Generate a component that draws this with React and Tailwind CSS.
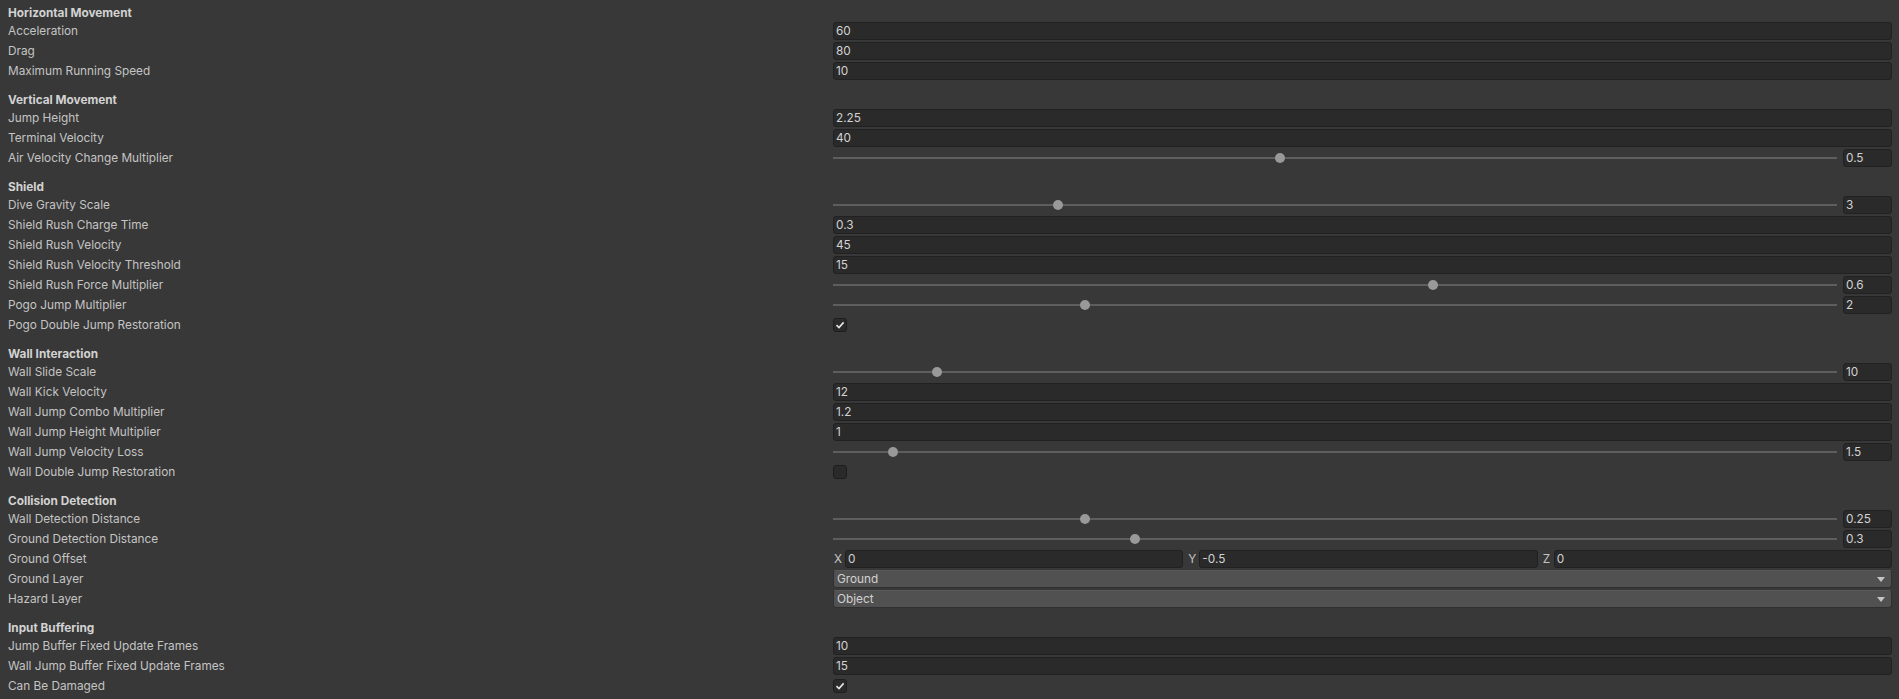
import React from "react";

// Unity-style inspector: player movement settings
const sections = [
  {
    title: "Horizontal Movement",
    rows: [
      { label: "Acceleration", type: "field", value: "60" },
      { label: "Drag", type: "field", value: "80" },
      { label: "Maximum Running Speed", type: "field", value: "10" },
    ],
  },
  {
    title: "Vertical Movement",
    rows: [
      { label: "Jump Height", type: "field", value: "2.25" },
      { label: "Terminal Velocity", type: "field", value: "40" },
      { label: "Air Velocity Change Multiplier", type: "slider", value: "0.5", thumb: 442 },
    ],
  },
  {
    title: "Shield",
    rows: [
      { label: "Dive Gravity Scale", type: "slider", value: "3", thumb: 220 },
      { label: "Shield Rush Charge Time", type: "field", value: "0.3" },
      { label: "Shield Rush Velocity", type: "field", value: "45" },
      { label: "Shield Rush Velocity Threshold", type: "field", value: "15" },
      { label: "Shield Rush Force Multiplier", type: "slider", value: "0.6", thumb: 595 },
      { label: "Pogo Jump Multiplier", type: "slider", value: "2", thumb: 247 },
      { label: "Pogo Double Jump Restoration", type: "check", value: true },
    ],
  },
  {
    title: "Wall Interaction",
    rows: [
      { label: "Wall Slide Scale", type: "slider", value: "10", thumb: 99 },
      { label: "Wall Kick Velocity", type: "field", value: "12" },
      { label: "Wall Jump Combo Multiplier", type: "field", value: "1.2" },
      { label: "Wall Jump Height Multiplier", type: "field", value: "1" },
      { label: "Wall Jump Velocity Loss", type: "slider", value: "1.5", thumb: 55 },
      { label: "Wall Double Jump Restoration", type: "check", value: false },
    ],
  },
  {
    title: "Collision Detection",
    rows: [
      { label: "Wall Detection Distance", type: "slider", value: "0.25", thumb: 247 },
      { label: "Ground Detection Distance", type: "slider", value: "0.3", thumb: 297 },
      { label: "Ground Offset", type: "vector", value: ["0", "-0.5", "0"] },
      { label: "Ground Layer", type: "dropdown", value: "Ground" },
      { label: "Hazard Layer", type: "dropdown", value: "Object" },
    ],
  },
  {
    title: "Input Buffering",
    rows: [
      { label: "Jump Buffer Fixed Update Frames", type: "field", value: "10" },
      { label: "Wall Jump Buffer Fixed Update Frames", type: "field", value: "15" },
      { label: "Can Be Damaged", type: "check", value: true },
    ],
  },
];

function NumberField({ value, className = "" }) {
  return (
    <div
      className={`h-[18px] rounded-[3px] border border-[#212121] bg-[#2a2a2a] pl-[2px] text-[11.8px] leading-[17px] text-[#d2d2d2] ${className}`}
    >
      {value}
    </div>
  );
}

function Slider({ value, thumb }) {
  return (
    <div className="flex items-center">
      <div className="relative h-[2px] flex-1 bg-[#5e5e5e]">
        <div
          className="absolute top-[-4px] h-[10px] w-[10px] rounded-full bg-[#999999]"
          style={{ left: thumb }}
        />
      </div>
      <NumberField value={value} className="ml-[6px] w-[49px]" />
    </div>
  );
}

function Check({ checked }) {
  return (
    <div className="flex h-[14px] w-[14px] items-center justify-center rounded-[3px] border border-[#1e1e1e] bg-[#2a2a2a]">
      {checked && (
        <svg width="10" height="10" viewBox="0 0 10 10">
          <path d="M1.5 5.2 L4 7.6 L8.6 2.4" fill="none" stroke="#e4e4e4" strokeWidth="1.6" />
        </svg>
      )}
    </div>
  );
}

function Dropdown({ value }) {
  return (
    <div className="flex h-[18px] items-center justify-between rounded-[3px] border border-[#303030] border-t-[#585858] bg-[#515151] pl-[3px] pr-[6px] pt-[1px] text-[11.8px] text-[#d2d2d2]">
      <span>{value}</span>
      <svg width="8" height="5" viewBox="0 0 8 5">
        <path d="M0 0 H8 L4 5 Z" fill="#c4c4c4" />
      </svg>
    </div>
  );
}

function Vector({ values }) {
  return (
    <div className="flex gap-[4px]">
      {["X", "Y", "Z"].map((axis, i) => (
        <div key={axis} className="flex flex-1 items-center">
          <span className="w-[12px] pl-[1px] pt-[1px] text-[11.8px] text-[#c4c4c4]">{axis}</span>
          <NumberField value={values[i]} className="flex-1" />
        </div>
      ))}
    </div>
  );
}

function Control({ row }) {
  if (row.type === "slider") return <Slider value={row.value} thumb={row.thumb} />;
  if (row.type === "check") return <Check checked={row.value} />;
  if (row.type === "dropdown") return <Dropdown value={row.value} />;
  if (row.type === "vector") return <Vector values={row.value} />;
  return <NumberField value={row.value} />;
}

export default function App() {
  return (
    <div
      className="h-[699px] w-full overflow-hidden bg-[#383838] pl-2 pr-[7px] pt-[1px]"
      style={{ fontFamily: "Inter, 'Noto Sans', sans-serif" }}
    >
      {sections.map((s, si) => (
        <div key={s.title}>
          <div
            className={`flex h-[20px] items-end text-[11.8px] font-bold leading-[15px] text-[#d2d2d2] ${si === 0 ? "" : "mt-[7px]"}`}
          >
            {s.title}
          </div>
          {s.rows.map((row) => (
            <div key={row.label} className="flex h-[20px] items-center">
              <div className="w-[825px] shrink-0 pt-[1px] text-[11.8px] text-[#c4c4c4]">{row.label}</div>
              <div className="flex-1">
                <Control row={row} />
              </div>
            </div>
          ))}
        </div>
      ))}
    </div>
  );
}
